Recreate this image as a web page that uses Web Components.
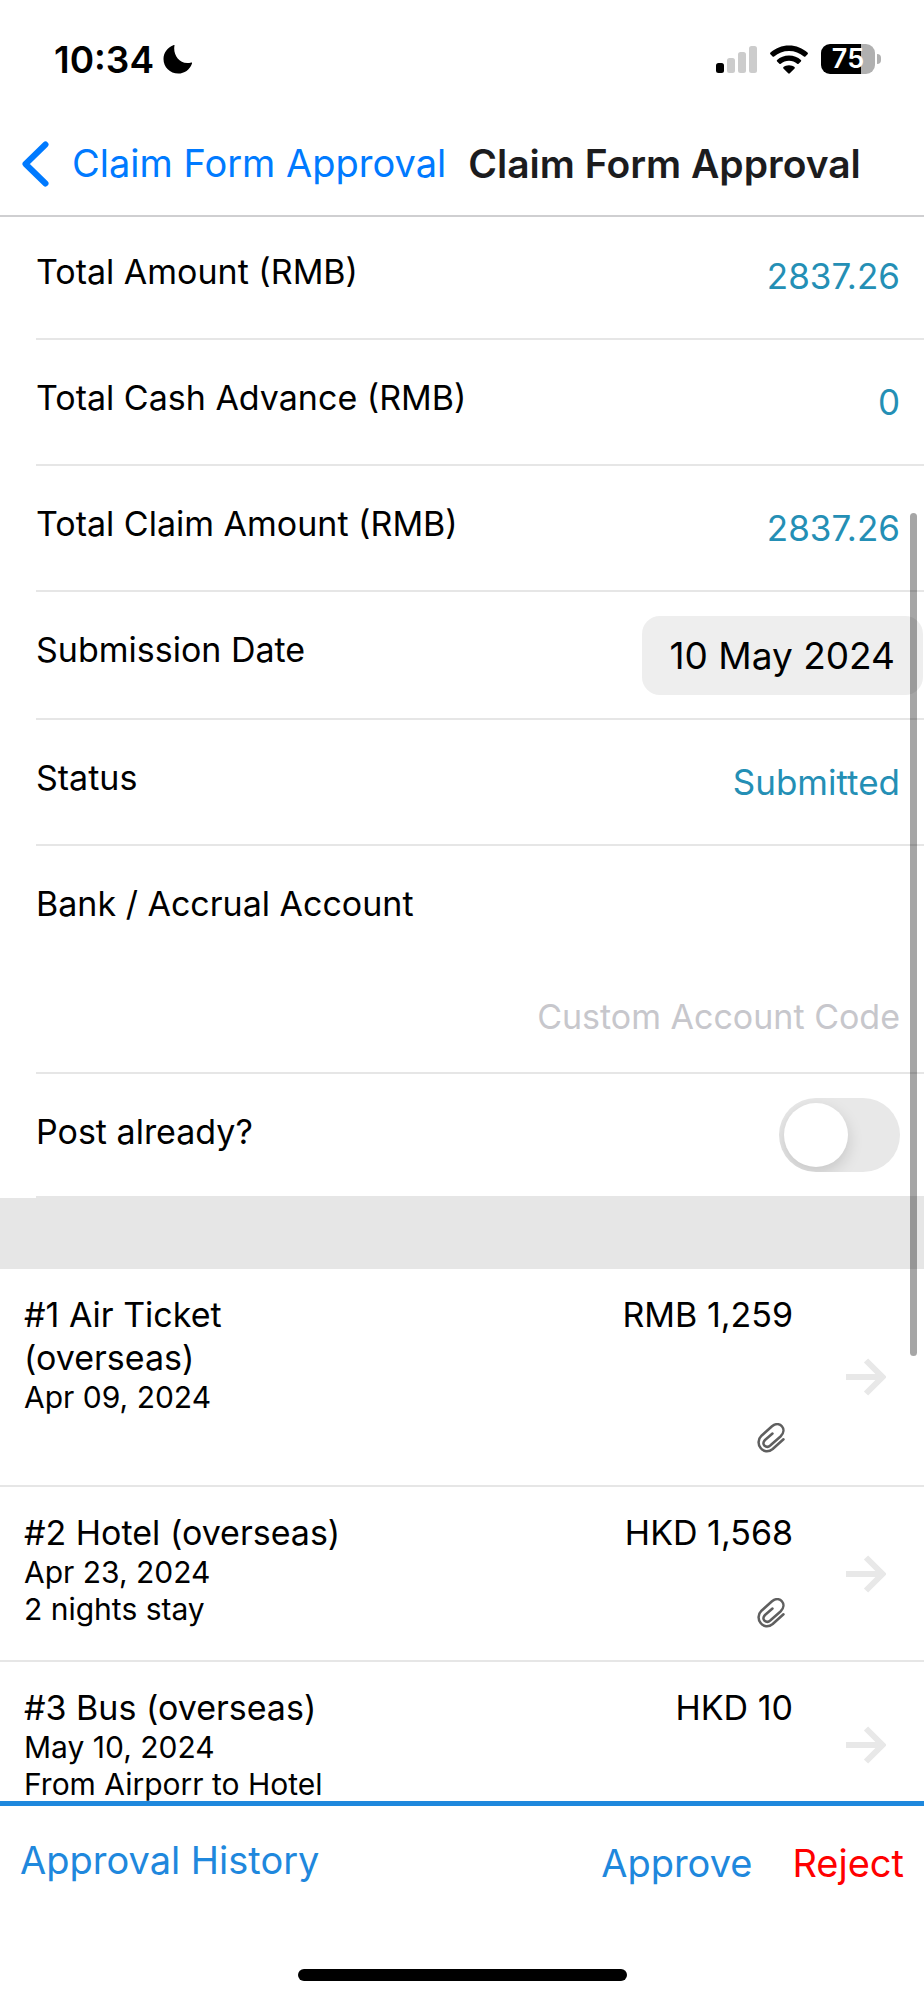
<!DOCTYPE html>
<html lang="en">
<head>
<meta charset="utf-8">
<meta name="viewport" content="width=device-width, initial-scale=1">
<title>Claim Form Approval</title>
<style>
  body {
    margin: 0;
    background: #fff;
    color: #000;
    font-family: Inter, "Liberation Sans", sans-serif;
    font-size: 34px;
    line-height: 43px;
  }
</style>
</head>
<body>
<claim-app>
  <status-bar slot="top" time="10:34" battery="75"></status-bar>
  <nav-header slot="top" back="Claim Form Approval">Claim Form Approval</nav-header>

  <claim-field label="Total Amount (RMB)" value="2837.26"></claim-field>
  <claim-field label="Total Cash Advance (RMB)" value="0"></claim-field>
  <claim-field label="Total Claim Amount (RMB)" value="2837.26"></claim-field>
  <claim-field type="date" label="Submission Date" value="10 May 2024"></claim-field>
  <claim-field label="Status" value="Submitted"></claim-field>
  <claim-field type="text" label="Bank / Accrual Account" placeholder="Custom Account Code"></claim-field>
  <claim-field type="switch" label="Post already?"></claim-field>

  <section-gap></section-gap>

  <claim-item amount="RMB 1,259" date="Apr 09, 2024" attached>#1 Air Ticket (overseas)</claim-item>
  <claim-item amount="HKD 1,568" date="Apr 23, 2024" note="2 nights stay" attached>#2 Hotel (overseas)</claim-item>
  <claim-item amount="HKD 10" date="May 10, 2024" note="From Airporr to Hotel">#3 Bus (overseas)</claim-item>

  <action-bar slot="bottom"></action-bar>
</claim-app>

<script>
class ClaimApp extends HTMLElement {
  connectedCallback() {
    this.attachShadow({ mode: 'open' }).innerHTML = `
      <style>
        :host {
          display: flex;
          flex-direction: column;
          height: 100vh;
        }
        main {
          position: relative;
          flex: 1;
          min-height: 0;
          overflow: hidden;
        }
        /* the list is resting slightly scrolled under the header */
        .list {
          margin-top: -3px;
        }
        .thumb {
          position: absolute;
          top: 296px;
          right: 7px;
          width: 7px;
          height: 843px;
          border-radius: 4px;
          background: rgba(0, 0, 0, 0.35);
        }
      </style>
      <slot name="top"></slot>
      <main>
        <div class="list"><slot></slot></div>
        <div class="thumb"></div>
      </main>
      <slot name="bottom"></slot>
    `;
  }
}

class StatusBar extends HTMLElement {
  connectedCallback() {
    this.attachShadow({ mode: 'open' }).innerHTML = `
      <style>
        :host {
          display: flex;
          justify-content: space-between;
          align-items: center;
          height: 118px;
          padding: 0 43px 0 54px;
          font-weight: 600;
        }
        .left {
          display: flex;
          align-items: center;
          gap: 9px;
          font-size: 37px;
        }
        .right {
          display: flex;
          align-items: center;
          gap: 13px;
        }
        svg {
          display: block;
        }
        .battery {
          display: flex;
          align-items: center;
          gap: 2px;
        }
        .cell {
          display: flex;
          align-items: center;
          justify-content: center;
          width: 54px;
          height: 30px;
          border-radius: 9px;
          color: #fff;
          background: linear-gradient(to right, #000 75%, #b0b0b0 75%);
          font-size: 27px;
          line-height: 30px;
        }
        .tip {
          width: 4px;
          height: 10px;
          border-radius: 0 4px 4px 0;
          background: #b0b0b0;
        }
      </style>
      <div class="left">
        <span>${this.getAttribute('time')}</span>
        <svg width="29" height="29" viewBox="0 0 29 29" aria-hidden="true">
          <path d="M11.5 0.4C9.6 9.8 16.8 20.6 28.3 17.4C29 17.3 29.2 18 28.9 18.7C26.7 24.7 21.5 28.5 15.3 28.5C7 28.5 0.5 22.2 0.5 14C0.5 7.8 4.4 2.4 10.3 0.2C11 0 11.6 0 11.5 0.4Z"/>
        </svg>
      </div>
      <div class="right">
        <svg width="41" height="28" viewBox="0 0 41 28" aria-hidden="true">
          <rect x="0" y="18" width="8" height="10" rx="2.5"/>
          <g fill="#ccc">
            <rect x="11" y="13" width="8" height="15" rx="2.5"/>
            <rect x="22" y="7" width="8" height="21" rx="2.5"/>
            <rect x="33" y="1" width="8" height="27" rx="2.5"/>
          </g>
        </svg>
        <svg width="38" height="29" viewBox="0 0 38 29" aria-hidden="true">
          <path d="M19 0.5C26.2 0.5 32.7 3.2 37.5 7.6C38.1 8.2 38.1 8.7 37.6 9.2L35.4 11.4C34.9 11.8 34.4 11.8 33.9 11.4C29.8 7.9 24.7 5.9 19 5.9C13.3 5.9 8.2 7.9 4.1 11.4C3.6 11.8 3.1 11.8 2.6 11.4L0.4 9.2C-0.1 8.7-0.1 8.2 0.5 7.6C5.3 3.2 11.8 0.5 19 0.5Z"/>
          <path d="M19 10.5C23.7 10.5 27.8 12.2 30.9 15C31.4 15.5 31.4 16 30.9 16.5L28.6 18.7C28.1 19.1 27.7 19.1 27.2 18.7C24.9 16.9 22.2 15.8 19 15.8C15.8 15.8 13.1 16.9 10.8 18.7C10.3 19.1 9.9 19.1 9.4 18.7L7.1 16.5C6.6 16 6.6 15.5 7.1 15C10.2 12.2 14.3 10.5 19 10.5Z"/>
          <path d="M19 20.3C21.2 20.3 23.1 21 24.5 22.1C25 22.5 25 23 24.6 23.4L19.8 28.3C19.3 28.8 18.7 28.8 18.2 28.3L13.4 23.4C13 23 13 22.5 13.5 22.1C14.9 21 16.8 20.3 19 20.3Z"/>
        </svg>
        <div class="battery">
          <div class="cell">${this.getAttribute('battery')}</div>
          <div class="tip"></div>
        </div>
      </div>
    `;
  }
}

class NavHeader extends HTMLElement {
  connectedCallback() {
    this.attachShadow({ mode: 'open' }).innerHTML = `
      <style>
        :host {
          display: flex;
          align-items: center;
          gap: 22px;
          height: 91px;
          padding: 0 21px 6px;
          border-bottom: 2px solid #cfcfd1;
          font-size: 38px;
          white-space: nowrap;
        }
        a {
          display: flex;
          align-items: center;
          gap: 23px;
          color: #007aff;
          text-decoration: none;
        }
        h1 {
          margin: 0;
          color: #1c1c1e;
          font-size: 39px;
          font-weight: 600;
        }
      </style>
      <a href="#">
        <svg width="28" height="46" viewBox="0 0 28 46" fill="none" stroke="currentColor" stroke-width="6" stroke-linecap="round" stroke-linejoin="round" aria-hidden="true">
          <path d="M24.5 3.5L4.5 23L24.5 42.5"/>
        </svg>
        ${this.getAttribute('back')}
      </a>
      <h1><slot></slot></h1>
    `;
  }
}

class ClaimField extends HTMLElement {
  control() {
    const value = this.getAttribute('value') || '';
    switch (this.getAttribute('type')) {
      case 'date':
        return `<button id="control" type="button">${value}</button>`;
      case 'text':
        return `<input id="control" type="text" placeholder="${this.getAttribute('placeholder')}" value="${value}">`;
      case 'switch':
        return `<input id="control" type="checkbox" role="switch">`;
      default:
        return `<output id="control">${value}</output>`;
    }
  }

  connectedCallback() {
    this.attachShadow({ mode: 'open' }).innerHTML = `
      <style>
        :host {
          display: flex;
          align-items: center;
          justify-content: space-between;
          box-sizing: border-box;
          min-height: 126px;
          margin-left: 36px;
          padding-right: 24px;
          border-bottom: 2px solid #e6e6e6;
        }
        label {
          align-self: flex-start;
          padding-top: 36px;
        }
        output {
          color: #248fb5;
          font-size: 35px;
        }
        :host([type="date"]) {
          padding: 24px 1px 23px 0;
        }
        :host([type="date"]) label {
          padding-top: 12px;
        }
        button {
          height: 79px;
          padding: 0 28px;
          border: 0;
          border-radius: 18px;
          background: #eee;
          color: #000;
          font: inherit;
          font-size: 37px;
        }
        :host([type="text"]) {
          flex-direction: column;
          align-items: stretch;
          gap: 70px;
          padding-bottom: 34px;
        }
        input[type="text"] {
          width: 100%;
          height: 43px;
          padding: 0;
          border: 0;
          outline: 0;
          background: none;
          color: #248fb5;
          font: inherit;
          text-align: right;
        }
        input::placeholder {
          color: #c7c7cc;
          opacity: 1;
        }
        :host([type="switch"]) {
          min-height: 124px;
        }
        input[type="checkbox"] {
          appearance: none;
          width: 121px;
          height: 74px;
          margin: 0;
          padding: 5px;
          border-radius: 37px;
          background: #e8e8e8;
          overflow: hidden;
        }
        input[type="checkbox"]::before {
          content: "";
          display: block;
          width: 64px;
          height: 64px;
          border-radius: 50%;
          background: #fff;
          box-shadow: 0 6px 16px rgba(0, 0, 0, 0.15);
        }
        input[type="checkbox"]:checked {
          background: #34c759;
        }
        input[type="checkbox"]:checked::before {
          margin-left: auto;
        }
      </style>
      <label for="control">${this.getAttribute('label')}</label>
      ${this.control()}
    `;
  }
}

class SectionGap extends HTMLElement {
  connectedCallback() {
    this.attachShadow({ mode: 'open' }).innerHTML = `
      <style>
        :host {
          display: block;
          height: 71px;
          background: #e6e6e6;
        }
      </style>
    `;
  }
}

class ClaimItem extends HTMLElement {
  connectedCallback() {
    this.attachShadow({ mode: 'open' }).innerHTML = `
      <style>
        :host {
          display: grid;
          grid-template-columns: 4fr 5fr auto;
          padding: 24px 38px 22px 24px;
          border-bottom: 2px solid #e6e6e6;
        }
        :host([attached]) {
          padding-bottom: 32px;
        }
        h2, p {
          margin: 0;
          font-weight: 400;
        }
        h2 {
          font-size: 34px;
          line-height: 43px;
        }
        p {
          min-height: 37px;
          font-size: 30px;
          line-height: 37px;
        }
        .side {
          display: flex;
          flex-direction: column;
          justify-content: space-between;
          align-items: flex-end;
        }
        .clip {
          margin-right: 8px;
        }
        .arrow {
          align-self: center;
          margin-left: 53px;
        }
        /* the taller bottom padding belongs to the text, not the arrow */
        :host([attached]) .arrow {
          margin-top: 8px;
        }
        svg {
          display: block;
        }
      </style>
      <div>
        <h2><slot></slot></h2>
        <p>${this.getAttribute('date')}</p>
        <p>${this.getAttribute('note') || ''}</p>
      </div>
      <div class="side">
        <span>${this.getAttribute('amount')}</span>
        ${this.hasAttribute('attached') ? `
          <svg class="clip" width="28" height="30" viewBox="0 0 28 30" fill="none" stroke="#5f5f5f" stroke-width="2.5" stroke-linecap="round" stroke-linejoin="round" role="img" aria-label="Attachment">
            <path d="M15.5 10.5L8 17C3.5 21.5 9.500 26 13.500 22.300L23.500 13.500C31 6 22.500 -3 15 3.200L4.500 12.700C-3.500 20.500 6.500 33.500 15.700 26L26.500 16.300"/>
          </svg>
        ` : ''}
      </div>
      <svg class="arrow" width="40" height="38" viewBox="0 0 40 38" fill="none" stroke="#e8e8e8" stroke-width="6" aria-hidden="true">
        <path d="M0 19H36M20 2.500L36.500 19L20 35.500"/>
      </svg>
    `;
  }
}

class ActionBar extends HTMLElement {
  connectedCallback() {
    this.attachShadow({ mode: 'open' }).innerHTML = `
      <style>
        :host {
          display: block;
          border-top: 5px solid #1f88dd;
        }
        .actions {
          display: flex;
          align-items: center;
          gap: 40px;
          height: 114px;
          padding: 0 20px;
        }
        button {
          padding: 0;
          border: 0;
          background: none;
          color: #1f88dd;
          font: inherit;
          font-size: 38px;
        }
        .history {
          margin-right: auto;
          padding-bottom: 5px;
        }
        .reject {
          color: #f00;
        }
        .home {
          width: 329px;
          height: 12px;
          margin: 49px auto 19px;
          border-radius: 6px;
          background: #000;
        }
      </style>
      <div class="actions">
        <button type="button" class="history">Approval History</button>
        <button type="button">Approve</button>
        <button type="button" class="reject">Reject</button>
      </div>
      <div class="home"></div>
    `;
  }
}

customElements.define('claim-app', ClaimApp);
customElements.define('status-bar', StatusBar);
customElements.define('nav-header', NavHeader);
customElements.define('claim-field', ClaimField);
customElements.define('section-gap', SectionGap);
customElements.define('claim-item', ClaimItem);
customElements.define('action-bar', ActionBar);
</script>
</body>
</html>
